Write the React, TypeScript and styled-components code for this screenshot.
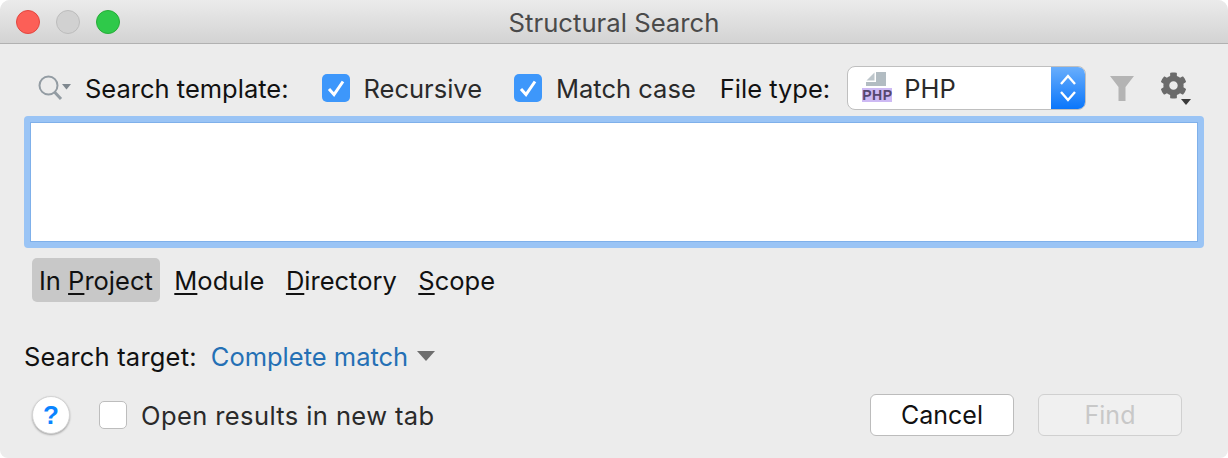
import { FunctionComponent } from "react";
import styled, { createGlobalStyle } from "styled-components";
import { FaCog } from "react-icons/fa";

const GlobalStyle = createGlobalStyle`
  html, body {
    margin: 0;
    padding: 0;
    background: #ffffff;
  }
  * {
    box-sizing: border-box;
  }
`;

const Window = styled.div`
  width: 1228px;
  height: 458px;
  background: #ececec;
  border-radius: 10px 10px 8px 8px;
  overflow: hidden;
  font-family: "Inter", "Liberation Sans", sans-serif;
  font-size: 25.5px;
  color: #111111;
`;
const TitleBar = styled.div`
  position: relative;
  height: 44px;
  padding-top: 2px;
  display: flex;
  align-items: center;
  justify-content: center;
  background: linear-gradient(#ebebeb, #d3d3d3);
  border-bottom: 1px solid #b1b1b1;
  color: #4a4a4a;
  font-size: 25.7px;
`;
const Lights = styled.div`
  position: absolute;
  top: 10px;
  left: 16px;
  display: flex;
  gap: 16px;
`;
const Light = styled.span<{ $fill: string; $edge: string }>`
  width: 24px;
  height: 24px;
  border-radius: 50%;
  background: ${(p) => p.$fill};
  border: 1px solid ${(p) => p.$edge};
`;
const Body = styled.div`
  padding: 22px 24px 0;
`;
const Toolbar = styled.div`
  height: 44px;
  display: flex;
  align-items: center;
`;
const Label = styled.span<{ $left?: number; $muted?: boolean; $track?: number }>`
  margin-left: ${(p) => p.$left ?? 0}px;
  white-space: nowrap;
  letter-spacing: ${(p) => p.$track ?? 0}px;
  color: ${(p) => (p.$muted ? "#2a2a2a" : "#111111")};
`;
const SearchGlyph = styled.svg`
  margin-left: 14px;
  width: 33px;
  height: 26px;
  flex: none;
`;
const CheckBox = styled.span<{ $checked?: boolean; $left: number }>`
  flex: none;
  width: 28px;
  height: 28px;
  margin-left: ${(p) => p.$left}px;
  border-radius: 5px;
  display: flex;
  align-items: center;
  justify-content: center;
  background: ${(p) => (p.$checked ? "#3d97fb" : "#ffffff")};
  border: ${(p) => (p.$checked ? "none" : "1px solid #bdbdbd")};
`;
const Select = styled.div`
  flex: none;
  width: 239px;
  height: 44px;
  margin-left: 17px;
  display: flex;
  align-items: center;
  background: #ffffff;
  border: 1px solid #bfbfbf;
  border-radius: 8px;
  overflow: hidden;
  color: #2a2a2a;
`;
const FileIcon = styled.div`
  flex: none;
  width: 30px;
  height: 30px;
  margin-left: 14px;
  position: relative;
`;
const FileSheet = styled.svg`
  position: absolute;
  top: -1px;
  left: 4px;
  width: 20px;
  height: 14px;
`;
const PhpBadge = styled.span`
  position: absolute;
  left: 0;
  top: 15px;
  width: 30px;
  height: 14px;
  background: #cdb9f3;
  color: #55476e;
  font-family: "Liberation Sans", sans-serif;
  font-size: 14px;
  font-weight: 700;
  line-height: 15px;
  letter-spacing: 0.5px;
  text-align: center;
`;
const SelectValue = styled.span`
  flex: 1;
  margin-left: 12px;
`;
const Stepper = styled.div`
  flex: none;
  width: 34px;
  height: 100%;
  display: flex;
  align-items: center;
  justify-content: center;
  background: linear-gradient(#69aefc, #0a76fb);
`;
const Funnel = styled.svg`
  flex: none;
  margin-left: 24px;
  width: 24px;
  height: 25px;
`;
const GearWrap = styled.div`
  position: relative;
  flex: none;
  margin-left: 26px;
  width: 31px;
  height: 36px;
  display: flex;
  padding-top: 2px;
  color: #6b6b6b;
`;
const GearCaret = styled.span`
  position: absolute;
  right: 0;
  bottom: 1px;
  width: 0;
  height: 0;
  border-left: 5.5px solid transparent;
  border-right: 5.5px solid transparent;
  border-top: 6px solid #3a3a3a;
`;
const EditorRing = styled.div`
  margin-top: 6px;
  height: 132px;
  border: 6px solid #9ac4f5;
  border-radius: 4px;
  background: #ffffff;
  box-shadow: inset 0 0 0 1px #7fb0ea;
`;
const ScopeRow = styled.div`
  margin-top: 10px;
  margin-left: 8px;
  height: 44px;
  display: flex;
  align-items: center;
  gap: 7.5px;
`;
const ScopeTab = styled.span<{ $active?: boolean }>`
  height: 44px;
  padding: 0 7px;
  display: flex;
  align-items: center;
  white-space: pre;
  border-radius: 5px;
  background: ${(p) => (p.$active ? "#c8c8c8" : "transparent")};

  u {
    text-decoration-thickness: 2px;
    text-underline-offset: 3px;
  }
`;
const TargetRow = styled.div`
  margin-top: 36px;
  height: 36px;
  display: flex;
  align-items: center;
`;
const TargetLink = styled.span`
  margin-left: 14px;
  color: #2470b5;
  white-space: nowrap;
`;
const TargetCaret = styled.span`
  margin-left: 9px;
  width: 0;
  height: 0;
  border-left: 9px solid transparent;
  border-right: 9px solid transparent;
  border-top: 10px solid #6e6e6e;
`;
const FooterRow = styled.div`
  margin-top: 20px;
  height: 42px;
  display: flex;
  align-items: center;
  padding-left: 8px;
`;
const HelpButton = styled.span`
  flex: none;
  width: 38px;
  height: 38px;
  border-radius: 50%;
  display: flex;
  align-items: center;
  justify-content: center;
  background: #ffffff;
  border: 1px solid #d4d4d4;
  box-shadow: 0 1px 2px rgba(0, 0, 0, 0.3);
  color: #0a84ff;
  font-family: "Liberation Sans", sans-serif;
  font-size: 26px;
  font-weight: 700;
`;
const Spacer = styled.div`
  flex: 1;
`;
const DialogButton = styled.span<{ $disabled?: boolean }>`
  flex: none;
  width: 144px;
  height: 42px;
  margin-right: ${(p) => (p.$disabled ? 22 : 24)}px;
  display: flex;
  align-items: center;
  justify-content: center;
  border-radius: 6px;
  font-size: 25px;
  background: ${(p) => (p.$disabled ? "#f0f0f0" : "#ffffff")};
  border: 1px solid ${(p) => (p.$disabled ? "#d0d0d0" : "#bcbcbc")};
  color: ${(p) => (p.$disabled ? "#c8c8c8" : "#111111")};
`;

const Tick: FunctionComponent = () => (
  <svg width="20" height="20" viewBox="0 0 20 20">
    <path d="M3 11 L8 16.5 L17 3.5" fill="none" stroke="#ffffff" strokeWidth="3" />
  </svg>
);

const App: FunctionComponent = () => {
  return (
    <Window>
      <GlobalStyle />
      <TitleBar>
        <Lights>
          <Light $fill="#fc5f57" $edge="#e2463f" />
          <Light $fill="#d1d1d1" $edge="#bcbcbc" />
          <Light $fill="#2fc94a" $edge="#27ac38" />
        </Lights>
        Structural Search
      </TitleBar>
      <Body>
        <Toolbar>
          <SearchGlyph viewBox="0 0 33 26">
            <circle cx="10.5" cy="10.5" r="9" fill="none" stroke="#939ca3" strokeWidth="2" />
            <path d="M16.5 17 L23 24" stroke="#939ca3" strokeWidth="3" />
            <path d="M24 9 H33 L28.5 14.5 Z" fill="#7f888f" />
          </SearchGlyph>
          <Label $left={14}>Search template:</Label>
          <CheckBox $checked $left={33}>
            <Tick />
          </CheckBox>
          <Label $left={14} $muted>
            Recursive
          </Label>
          <CheckBox $checked $left={32}>
            <Tick />
          </CheckBox>
          <Label $left={14} $muted>
            Match case
          </Label>
          <Label $left={24}>File type:</Label>
          <Select>
            <FileIcon>
              <FileSheet viewBox="0 0 20 14">
                <path d="M10 0 H20 V14 H0 V10 H10 Z" fill="#b2bcc2" />
                <path d="M8.5 0.5 V8.5 H0.5 Z" fill="#bdc6cb" />
              </FileSheet>
              <PhpBadge>PHP</PhpBadge>
            </FileIcon>
            <SelectValue>PHP</SelectValue>
            <Stepper>
              <svg width="18" height="28" viewBox="0 0 18 28">
                <path
                  d="M2 10 L9 2 L16 10 M2 18 L9 26 L16 18"
                  fill="none"
                  stroke="#ffffff"
                  strokeWidth="2.4"
                />
              </svg>
            </Stepper>
          </Select>
          <Funnel viewBox="0 0 24 25">
            <path d="M0 0 H24 L15.5 11 V25 H8.5 V11 Z" fill="#b4b4b4" />
          </Funnel>
          <GearWrap>
            <FaCog size={27} />
            <GearCaret />
          </GearWrap>
        </Toolbar>
        <EditorRing />
        <ScopeRow>
          <ScopeTab $active>
            In <u>P</u>roject
          </ScopeTab>
          <ScopeTab>
            <u>M</u>odule
          </ScopeTab>
          <ScopeTab>
            <u>D</u>irectory
          </ScopeTab>
          <ScopeTab>
            <u>S</u>cope
          </ScopeTab>
        </ScopeRow>
        <TargetRow>
          <Label $track={0.2}>Search target:</Label>
          <TargetLink>Complete match</TargetLink>
          <TargetCaret />
        </TargetRow>
        <FooterRow>
          <HelpButton>?</HelpButton>
          <CheckBox $left={29} />
          <Label $left={14} $muted $track={0.4}>
            Open results in new tab
          </Label>
          <Spacer />
          <DialogButton>Cancel</DialogButton>
          <DialogButton $disabled>Find</DialogButton>
        </FooterRow>
      </Body>
    </Window>
  );
};

export default App;
